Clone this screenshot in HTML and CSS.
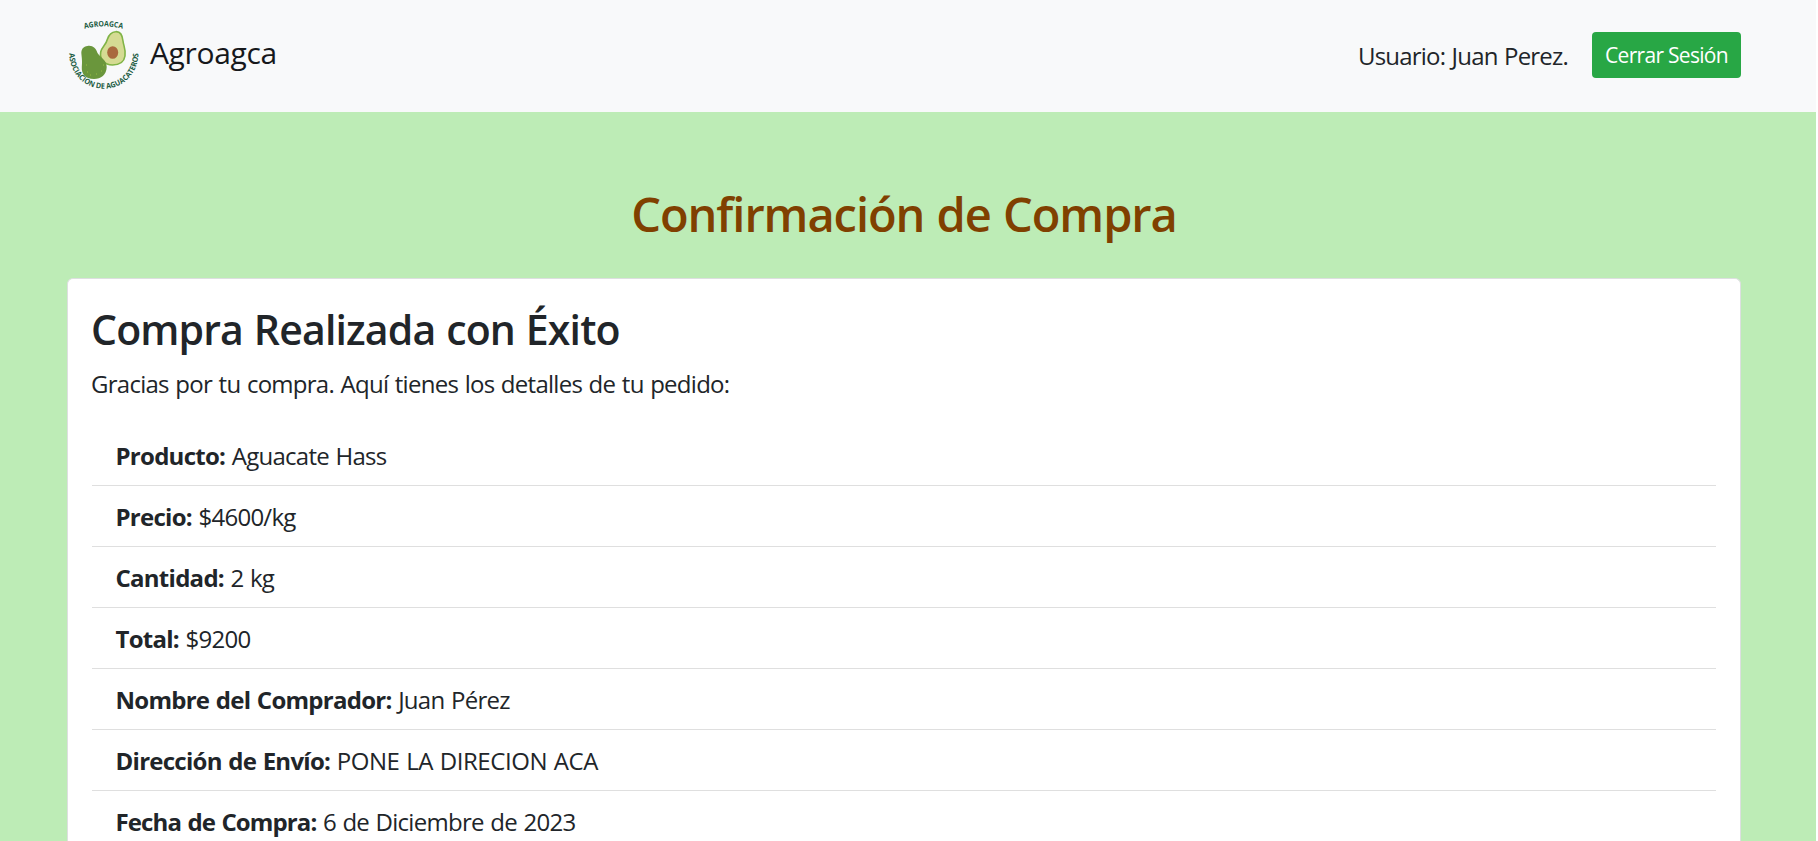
FILE: index.html
```html
<!DOCTYPE html>
<html lang="es">
<head>
<meta charset="utf-8">
<title>Confirmación de Compra</title>
<link rel="stylesheet" href="styles.css">
</head>
<body>
<div class="page">
<nav class="navbar">
  <a class="brand">
    <svg class="logo" width="74" height="74" viewBox="0 0 74 74">
      <defs>
        <path id="arc-top" d="M16.500 10Q36.500 4.600 56.500 10"/>
        <path id="arc-bottom" d="M2.300 35A34.500 34.800 0 1 0 71.300 35"/>
      </defs>
      <text class="logo-text"><textPath href="#arc-top" startOffset="50%" text-anchor="middle" textLength="38.500" lengthAdjust="spacingAndGlyphs">AGROAGCA</textPath></text>
      <text class="logo-text"><textPath href="#arc-bottom" startOffset="50%" text-anchor="middle" textLength="110" lengthAdjust="spacingAndGlyphs">ASOCIACION DE AGUACATEROS</textPath></text>
      <path d="M48.500 12.700C53.500 12.200 55.500 17 56 22C56.500 27 59 30 58 37C57 43.500 51.500 46 45.500 46C37.500 46 32.500 40.500 33.700 33C34.700 28 39 26 40.500 20C42 15.500 44.500 13 48.500 12.700Z" fill="#d5db93" stroke="#80b446" stroke-width="1.600"/>
      <ellipse cx="45.700" cy="33.500" rx="5.500" ry="6.300" fill="#a9693d"/>
      <path d="M20.500 26.900C25.500 26 29 29 30.500 34C33 38.500 39.700 40.500 39.700 48C39.500 56 34 60 27 60C18 60 14.400 55 14.800 48C15.300 42 14.900 40 14.400 35C14 30 16.500 27.400 20.500 26.900Z" fill="#6a963c"/>
      <path d="M20 53h1M23 56h1M29 55h1M34 52h1M36 46h1M19 46h1" stroke="#97bd45" stroke-width="1"/>
    </svg>
    <span class="brand-name">Agroagca</span>
  </a>
  <div class="session">
    <span class="user">Usuario: Juan Perez.</span>
    <button class="logout">Cerrar Sesión</button>
  </div>
</nav>
<main class="content">
  <h1 class="title">Confirmación de Compra</h1>
  <section class="card">
    <h2 class="card-title">Compra Realizada con Éxito</h2>
    <p class="intro">Gracias por tu compra. Aquí tienes los detalles de tu pedido:</p>
    <ul class="details">
      <li><strong>Producto:</strong> Aguacate Hass</li>
      <li><strong>Precio:</strong> $4600/kg</li>
      <li><strong>Cantidad:</strong> 2 kg</li>
      <li><strong>Total:</strong> $9200</li>
      <li><strong>Nombre del Comprador:</strong> Juan Pérez</li>
      <li><strong>Dirección de Envío:</strong> <span class="address">PONE LA DIRECION ACA</span></li>
      <li><strong class="date-label">Fecha de Compra:</strong> 6 de Diciembre de 2023</li>
    </ul>
  </section>
</main>
</div>
</body>
</html>
```
FILE: styles.css
```css
* { box-sizing: border-box; }
body {
  margin: 0;
  height: 841px;
  overflow: hidden;
  background: #fff;
  color: #212529;
  font: 24px/36px "Open Sans", "Noto Sans", sans-serif;
  letter-spacing: -0.73px;
  word-spacing: 1px;
}
.page {
  height: 841px;
  margin-right: 2px;
  overflow: hidden;
  background: #bdecb6;
}
.navbar {
  display: flex;
  justify-content: space-between;
  height: 112px;
  padding: 0 75px 0 67px;
  background: #f8f9fa;
}
.brand { display: flex; padding-top: 19px; gap: 9px; }
.logo { display: block; overflow: visible; }
.logo-text { font: 700 7.6px "Open Sans", sans-serif; fill: #1c5c42; letter-spacing: 0; word-spacing: 0; }
.brand-name { padding-top: 11px; font-size: 30px; line-height: 45px; letter-spacing: -0.35px; color: #16181b; }
.session { display: flex; padding-top: 32px; gap: 24px; }
.user { padding-top: 6px; letter-spacing: -0.8px; }
.logout {
  width: 149px;
  height: 46px;
  padding: 0;
  border: 0;
  border-radius: 4px;
  background: #28a745;
  color: #fff;
  font: 21px/45px "Open Sans", sans-serif;
  letter-spacing: -0.7px;
}
.content { padding: 73px 75px 0 67px; }
.title {
  margin: 0 0 35px;
  color: #804000;
  font-size: 47px;
  line-height: 58px;
  font-weight: 600;
  letter-spacing: -1.05px;
  text-align: center;
}
.card {
  height: 563px;
  padding: 23px 24px 0;
  border: 1px solid #dddfe0;
  border-bottom: 0;
  border-radius: 6px 6px 0 0;
  background: #fff;
  overflow: hidden;
}
.card-title { margin: 0 0 10px; font-size: 41px; line-height: 54px; font-weight: 600; letter-spacing: -0.85px; text-indent: -1px; }
.intro { margin: 0 0 23px; text-indent: -1px; }
.details { list-style: none; margin: 0; padding: 0; }
.details li { height: 61px; padding: 13px 24px 11px; border-bottom: 1px solid #dfdfdf; text-indent: -0.5px; }
.details strong { font-weight: 700; }
.details .date-label { letter-spacing: -0.88px; }
.address { letter-spacing: -0.45px; }
```
